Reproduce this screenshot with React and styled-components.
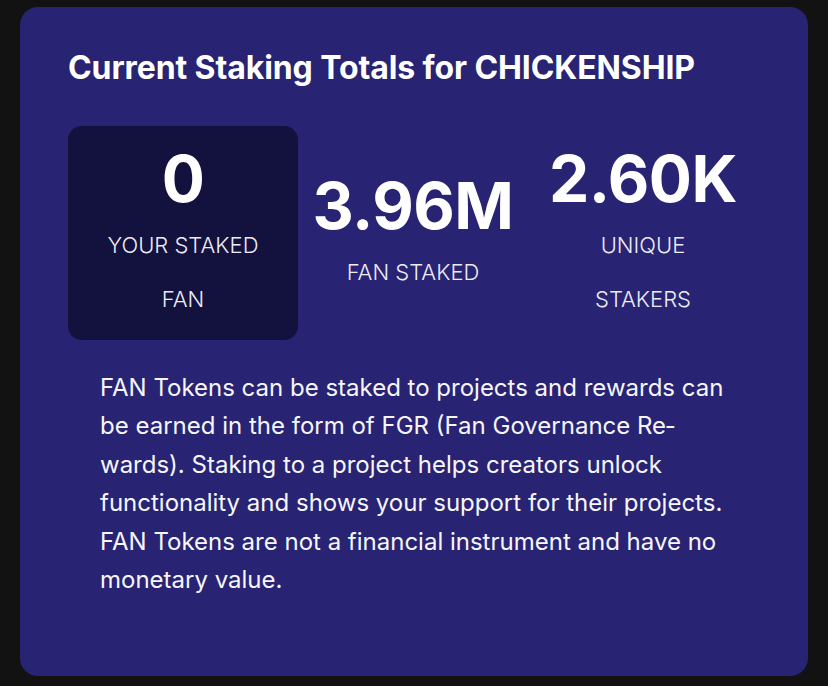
import React from "react";
import styled, { createGlobalStyle } from "styled-components";

const Global = createGlobalStyle`
  html, body { margin: 0; padding: 0; background: #121212; }
  body { font-family: Inter, "Noto Sans", sans-serif; -webkit-font-smoothing: antialiased; }
  * { box-sizing: border-box; }
`;

const Page = styled.div`
  padding: 7px 20px 10px 20px;
`;

const Card = styled.section`
  background: #282372;
  border-radius: 18px;
  padding: 41px 48px 60px 48px;
  color: #ffffff;
  height: 669px;
`;

const Title = styled.h2`
  margin: 0;
  font-size: 32px;
  font-weight: 700;
  line-height: 40px;
  letter-spacing: -0.1px;
`;

const Stats = styled.div`
  display: grid;
  grid-template-columns: repeat(3, 230px);
  align-items: center;
  margin-top: 38px;
`;

const Stat = styled.div`
  display: flex;
  flex-direction: column;
  align-items: center;
  text-align: center;
  padding: 14px 0;
  border-radius: 14px;
  background: ${(p) => (p.$highlight ? "#13113d" : "transparent")};
`;

const Value = styled.div`
  font-size: 64px;
  font-weight: 700;
  line-height: 78px;
  letter-spacing: -0.5px;
`;

const Label = styled.div`
  font-size: 22px;
  font-weight: 300;
  line-height: 54px;
  max-width: 165px;
  color: #ececf4;
`;

const Body = styled.p`
  margin: 28.5px 32px 0 32px;
  font-size: 24px;
  line-height: 38.5px;
  font-weight: 400;
  hyphens: auto;
  color: #f6f6fa;
`;

const stats = [
  { value: "0", label: "YOUR STAKED FAN", highlight: true },
  { value: "3.96M", label: "FAN STAKED" },
  { value: "2.60K", label: "UNIQUE STAKERS" },
];

export default function App() {
  return (
    <>
      <Global />
      <Page>
        <Card>
          <Title>Current Staking Totals for CHICKENSHIP</Title>
          <Stats>
            {stats.map((s) => (
              <Stat key={s.label} $highlight={s.highlight}>
                <Value>{s.value}</Value>
                <Label>{s.label}</Label>
              </Stat>
            ))}
          </Stats>
          <Body lang="en">
            FAN Tokens can be staked to projects and rewards can be earned in the form of FGR (Fan Governance Re&shy;wards). Staking to a project helps creators unlock functionality and shows your support for their projects. FAN Tokens are not a financial instrument and have no monetary value.
          </Body>
        </Card>
      </Page>
    </>
  );
}
